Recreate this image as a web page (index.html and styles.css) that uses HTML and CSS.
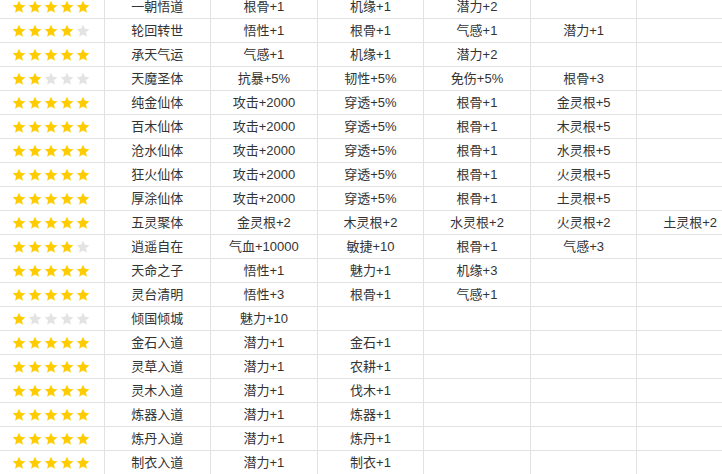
FILE: index.html
```html
<!DOCTYPE html>
<html lang="zh">
<head>
<meta charset="utf-8">
<link rel="stylesheet" href="styles.css">
</head>
<body>
<svg class="defs" width="0" height="0"><defs><symbol id="s" viewBox="0 0 24 24"><polygon points="12,1.2 15.2,8.2 22.8,9 17.1,14.2 18.7,21.8 12,17.9 5.3,21.8 6.9,14.2 1.2,9 8.8,8.2"/></symbol></defs></svg>
<div class="view">
<table class="grid">
<tbody>
<tr><td><span class="stars"><svg class="on"><use href="#s"/></svg><svg class="on"><use href="#s"/></svg><svg class="on"><use href="#s"/></svg><svg class="on"><use href="#s"/></svg><svg class="on"><use href="#s"/></svg></span></td><td>一朝悟道</td><td>根骨+1</td><td>机缘+1</td><td>潜力+2</td><td></td><td></td></tr>
<tr><td><span class="stars"><svg class="on"><use href="#s"/></svg><svg class="on"><use href="#s"/></svg><svg class="on"><use href="#s"/></svg><svg class="on"><use href="#s"/></svg><svg class="off"><use href="#s"/></svg></span></td><td>轮回转世</td><td>悟性+1</td><td>根骨+1</td><td>气感+1</td><td>潜力+1</td><td></td></tr>
<tr><td><span class="stars"><svg class="on"><use href="#s"/></svg><svg class="on"><use href="#s"/></svg><svg class="on"><use href="#s"/></svg><svg class="on"><use href="#s"/></svg><svg class="on"><use href="#s"/></svg></span></td><td>承天气运</td><td>气感+1</td><td>机缘+1</td><td>潜力+2</td><td></td><td></td></tr>
<tr><td><span class="stars"><svg class="on"><use href="#s"/></svg><svg class="on"><use href="#s"/></svg><svg class="off"><use href="#s"/></svg><svg class="off"><use href="#s"/></svg><svg class="off"><use href="#s"/></svg></span></td><td>天魔圣体</td><td>抗暴+5%</td><td>韧性+5%</td><td>免伤+5%</td><td>根骨+3</td><td></td></tr>
<tr><td><span class="stars"><svg class="on"><use href="#s"/></svg><svg class="on"><use href="#s"/></svg><svg class="on"><use href="#s"/></svg><svg class="on"><use href="#s"/></svg><svg class="on"><use href="#s"/></svg></span></td><td>纯金仙体</td><td>攻击+2000</td><td>穿透+5%</td><td>根骨+1</td><td>金灵根+5</td><td></td></tr>
<tr><td><span class="stars"><svg class="on"><use href="#s"/></svg><svg class="on"><use href="#s"/></svg><svg class="on"><use href="#s"/></svg><svg class="on"><use href="#s"/></svg><svg class="on"><use href="#s"/></svg></span></td><td>百木仙体</td><td>攻击+2000</td><td>穿透+5%</td><td>根骨+1</td><td>木灵根+5</td><td></td></tr>
<tr><td><span class="stars"><svg class="on"><use href="#s"/></svg><svg class="on"><use href="#s"/></svg><svg class="on"><use href="#s"/></svg><svg class="on"><use href="#s"/></svg><svg class="on"><use href="#s"/></svg></span></td><td>沧水仙体</td><td>攻击+2000</td><td>穿透+5%</td><td>根骨+1</td><td>水灵根+5</td><td></td></tr>
<tr><td><span class="stars"><svg class="on"><use href="#s"/></svg><svg class="on"><use href="#s"/></svg><svg class="on"><use href="#s"/></svg><svg class="on"><use href="#s"/></svg><svg class="on"><use href="#s"/></svg></span></td><td>狂火仙体</td><td>攻击+2000</td><td>穿透+5%</td><td>根骨+1</td><td>火灵根+5</td><td></td></tr>
<tr><td><span class="stars"><svg class="on"><use href="#s"/></svg><svg class="on"><use href="#s"/></svg><svg class="on"><use href="#s"/></svg><svg class="on"><use href="#s"/></svg><svg class="on"><use href="#s"/></svg></span></td><td>厚涂仙体</td><td>攻击+2000</td><td>穿透+5%</td><td>根骨+1</td><td>土灵根+5</td><td></td></tr>
<tr><td><span class="stars"><svg class="on"><use href="#s"/></svg><svg class="on"><use href="#s"/></svg><svg class="on"><use href="#s"/></svg><svg class="on"><use href="#s"/></svg><svg class="on"><use href="#s"/></svg></span></td><td>五灵聚体</td><td>金灵根+2</td><td>木灵根+2</td><td>水灵根+2</td><td>火灵根+2</td><td>土灵根+2</td></tr>
<tr><td><span class="stars"><svg class="on"><use href="#s"/></svg><svg class="on"><use href="#s"/></svg><svg class="on"><use href="#s"/></svg><svg class="on"><use href="#s"/></svg><svg class="off"><use href="#s"/></svg></span></td><td>逍遥自在</td><td>气血+10000</td><td>敏捷+10</td><td>根骨+1</td><td>气感+3</td><td></td></tr>
<tr><td><span class="stars"><svg class="on"><use href="#s"/></svg><svg class="on"><use href="#s"/></svg><svg class="on"><use href="#s"/></svg><svg class="on"><use href="#s"/></svg><svg class="on"><use href="#s"/></svg></span></td><td>天命之子</td><td>悟性+1</td><td>魅力+1</td><td>机缘+3</td><td></td><td></td></tr>
<tr><td><span class="stars"><svg class="on"><use href="#s"/></svg><svg class="on"><use href="#s"/></svg><svg class="on"><use href="#s"/></svg><svg class="on"><use href="#s"/></svg><svg class="on"><use href="#s"/></svg></span></td><td>灵台清明</td><td>悟性+3</td><td>根骨+1</td><td>气感+1</td><td></td><td></td></tr>
<tr><td><span class="stars"><svg class="on"><use href="#s"/></svg><svg class="off"><use href="#s"/></svg><svg class="off"><use href="#s"/></svg><svg class="off"><use href="#s"/></svg><svg class="off"><use href="#s"/></svg></span></td><td>倾国倾城</td><td>魅力+10</td><td></td><td></td><td></td><td></td></tr>
<tr><td><span class="stars"><svg class="on"><use href="#s"/></svg><svg class="on"><use href="#s"/></svg><svg class="on"><use href="#s"/></svg><svg class="on"><use href="#s"/></svg><svg class="on"><use href="#s"/></svg></span></td><td>金石入道</td><td>潜力+1</td><td>金石+1</td><td></td><td></td><td></td></tr>
<tr><td><span class="stars"><svg class="on"><use href="#s"/></svg><svg class="on"><use href="#s"/></svg><svg class="on"><use href="#s"/></svg><svg class="on"><use href="#s"/></svg><svg class="on"><use href="#s"/></svg></span></td><td>灵草入道</td><td>潜力+1</td><td>农耕+1</td><td></td><td></td><td></td></tr>
<tr><td><span class="stars"><svg class="on"><use href="#s"/></svg><svg class="on"><use href="#s"/></svg><svg class="on"><use href="#s"/></svg><svg class="on"><use href="#s"/></svg><svg class="on"><use href="#s"/></svg></span></td><td>灵木入道</td><td>潜力+1</td><td>伐木+1</td><td></td><td></td><td></td></tr>
<tr><td><span class="stars"><svg class="on"><use href="#s"/></svg><svg class="on"><use href="#s"/></svg><svg class="on"><use href="#s"/></svg><svg class="on"><use href="#s"/></svg><svg class="on"><use href="#s"/></svg></span></td><td>炼器入道</td><td>潜力+1</td><td>炼器+1</td><td></td><td></td><td></td></tr>
<tr><td><span class="stars"><svg class="on"><use href="#s"/></svg><svg class="on"><use href="#s"/></svg><svg class="on"><use href="#s"/></svg><svg class="on"><use href="#s"/></svg><svg class="on"><use href="#s"/></svg></span></td><td>炼丹入道</td><td>潜力+1</td><td>炼丹+1</td><td></td><td></td><td></td></tr>
<tr><td><span class="stars"><svg class="on"><use href="#s"/></svg><svg class="on"><use href="#s"/></svg><svg class="on"><use href="#s"/></svg><svg class="on"><use href="#s"/></svg><svg class="on"><use href="#s"/></svg></span></td><td>制衣入道</td><td>潜力+1</td><td>制衣+1</td><td></td><td></td><td></td></tr>
</tbody>
</table>
</div>
</body>
</html>
```

FILE: styles.css
```css
html, body {
  margin: 0;
  padding: 0;
  background: #ffffff;
}
.defs {
  position: absolute;
  width: 0;
  height: 0;
}
.view {
  width: 722px;
  height: 474px;
  overflow: hidden;
}
.grid {
  margin: -5px 0 0 -3px;
  width: 747px;
  table-layout: fixed;
  border-collapse: collapse;
  font-family: "Liberation Sans", "Noto Sans CJK SC", sans-serif;
  font-size: 13px;
  color: #333333;
}
.grid td {
  height: 23px;
  padding: 0;
  text-align: center;
  vertical-align: middle;
  border: 1px solid #e2e2e2;
  white-space: nowrap;
  line-height: 23px;
}
.grid tr:first-child td {
  border-top: none;
}
.stars {
  display: inline-flex;
  gap: 2px;
  vertical-align: middle;
  margin-top: -2px;
}
.stars svg {
  width: 14px;
  height: 14px;
  display: block;
}
.stars .on {
  fill: #ffcc00;
}
.stars .off {
  fill: #e3e3e3;
}
```
